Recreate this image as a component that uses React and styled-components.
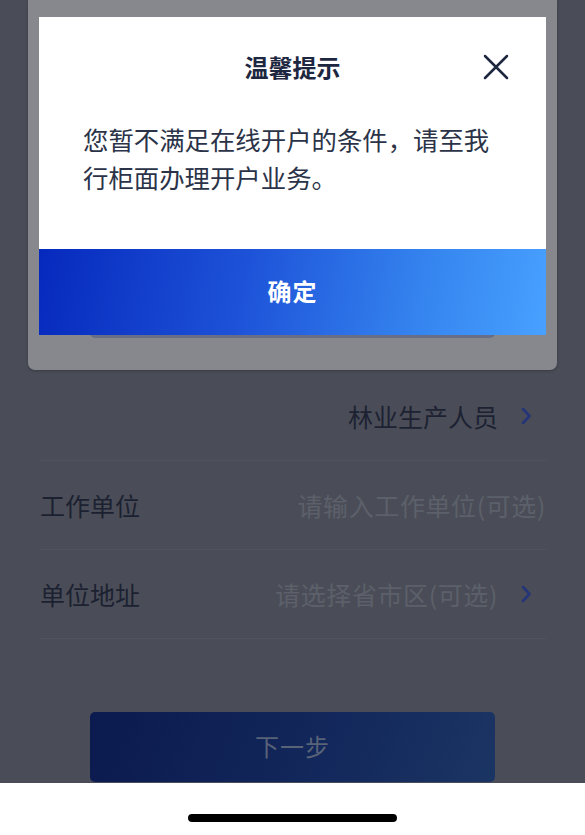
import React from 'react';
import styled, { createGlobalStyle } from 'styled-components';

const GlobalStyle = createGlobalStyle`
  html, body {
    margin: 0;
    padding: 0;
    background: #ffffff;
  }
  body {
    font-family: "Noto Sans CJK SC", "Noto Sans", sans-serif;
  }
`;

const Screen = styled.div`
  position: relative;
  width: 585px;
  height: 835px;
  display: flex;
  flex-direction: column;
  overflow: hidden;
`;

const Dimmed = styled.div`
  flex: 1;
  background: #4a4d57;
  display: flex;
  flex-direction: column;
  overflow: hidden;
`;

const BackCard = styled.div`
  margin: 0 28px;
  height: 370px;
  flex-shrink: 0;
  background: #86888e;
  border-radius: 0 0 7px 7px;
  box-shadow: 0 1px 3px rgba(0, 0, 0, 0.25);
  display: flex;
  flex-direction: column;
  justify-content: flex-end;
  padding: 0 62px 32px;
  box-sizing: border-box;
`;

const BackButton = styled.div`
  height: 60px;
  border-radius: 5px;
  background: #676e85;
`;

const Form = styled.div`
  margin: 2px 39px 0 40px;
`;

const Row = styled.div`
  height: 88px;
  display: flex;
  align-items: center;
  border-bottom: 1px solid #50535e;
`;

const Label = styled.span`
  font-size: 25px;
  color: #1c2131;
  flex-shrink: 0;
`;

const Value = styled.span`
  margin-left: auto;
  font-size: 25px;
  letter-spacing: ${(p) => (p.$placeholder ? '0.6px' : '0')};
  color: ${(p) => (p.$placeholder ? '#5c606a' : '#1d2233')};
`;

const Chevron = styled.svg`
  width: 24px;
  height: 24px;
  margin-left: 16px;
  margin-right: 8px;
  flex-shrink: 0;
`;

const NextButton = styled.div`
  margin: 73px 90px 0;
  height: 70px;
  flex-shrink: 0;
  border-radius: 5px;
  background: linear-gradient(110deg, #0b1a4f 0%, #13285c 60%, #1b3563 100%);
  display: flex;
  align-items: center;
  justify-content: center;
  padding-bottom: 3px;
  box-sizing: border-box;
  font-size: 24px;
  color: #596377;
  letter-spacing: 1px;
`;

const HomeArea = styled.div`
  height: 52px;
  flex-shrink: 0;
  background: #ffffff;
  display: flex;
  justify-content: center;
  padding-top: 31px;
  box-sizing: border-box;
`;

const HomeBar = styled.div`
  width: 209px;
  height: 8px;
  border-radius: 4px;
  background: #000000;
`;

const Modal = styled.div`
  position: absolute;
  top: 17px;
  left: 39px;
  width: 507px;
  background: #ffffff;
  display: flex;
  flex-direction: column;
`;

const ModalHeader = styled.div`
  position: relative;
  height: 100px;
  padding-top: 34px;
  box-sizing: border-box;
  text-align: center;
`;

const Title = styled.h2`
  margin: 0;
  font-size: 24px;
  line-height: 32px;
  font-weight: 600;
  color: #1e2740;
  letter-spacing: 0;
`;

const CloseButton = styled.button`
  position: absolute;
  top: 36px;
  right: 36px;
  width: 28px;
  height: 28px;
  padding: 0;
  border: none;
  background: none;
  display: flex;
  align-items: center;
  justify-content: center;
`;

const Message = styled.p`
  margin: 0;
  padding: 3px 40px 53px 44px;
  font-size: 25.4px;
  line-height: 38px;
  color: #2b3348;
`;

const ConfirmButton = styled.button`
  height: 86px;
  border: none;
  margin: 0;
  padding: 0 0 3px;
  background: linear-gradient(100deg, #0629bd 0%, #1d52d8 40%, #3584ef 75%, #48a1ff 100%);
  color: #ffffff;
  font-family: inherit;
  font-size: 24px;
  font-weight: 700;
  letter-spacing: 1px;
`;

function ChevronIcon() {
  return (
    <Chevron viewBox="0 0 24 24" fill="none">
      <path d="M9 5 L15.5 12 L9 19" stroke="#24357a" strokeWidth="2.6" strokeLinecap="round" strokeLinejoin="round" />
    </Chevron>
  );
}

const rows = [
  { label: '', value: '林业生产人员', arrow: true },
  { label: '工作单位', value: '请输入工作单位(可选)', placeholder: true },
  { label: '单位地址', value: '请选择省市区(可选)', placeholder: true, arrow: true },
];

export default function App() {
  return (
    <>
      <GlobalStyle />
      <Screen>
        <Dimmed>
          <BackCard>
            <BackButton />
          </BackCard>
          <Form>
            {rows.map((r, i) => (
              <Row key={i}>
                {r.label && <Label>{r.label}</Label>}
                <Value $placeholder={r.placeholder}>{r.value}</Value>
                {r.arrow && <ChevronIcon />}
              </Row>
            ))}
          </Form>
          <NextButton>下一步</NextButton>
        </Dimmed>
        <HomeArea>
          <HomeBar />
        </HomeArea>

        <Modal>
          <ModalHeader>
            <Title>温馨提示</Title>
            <CloseButton aria-label="关闭">
              <svg width="26" height="26" viewBox="0 0 26 26">
                <path d="M2 2 L24 24 M24 2 L2 24" stroke="#1e2740" strokeWidth="2.5" strokeLinecap="round" />
              </svg>
            </CloseButton>
          </ModalHeader>
          <Message>您暂不满足在线开户的条件，请至我行柜面办理开户业务。</Message>
          <ConfirmButton>确定</ConfirmButton>
        </Modal>
      </Screen>
    </>
  );
}
